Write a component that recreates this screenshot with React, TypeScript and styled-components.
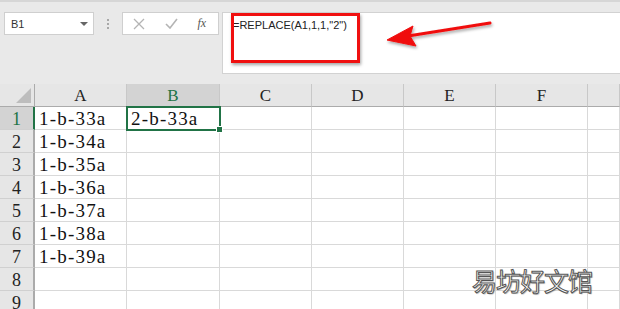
import React from "react";
import styled, { createGlobalStyle } from "styled-components";

const GlobalStyle = createGlobalStyle`
  html, body { margin: 0; padding: 0; }
  body {
    width: 620px;
    height: 309px;
    overflow: hidden;
    background: #ffffff;
    font-family: "Liberation Sans", Arial, sans-serif;
  }
`;

const Page = styled.div`
  position: relative;
  width: 620px;
  height: 309px;
  overflow: hidden;
`;

const Toolbar = styled.div`
  height: 84px;
  box-sizing: border-box;
  background: #e9e9e9;
  border-top: 2px solid #d6d6d6;
  display: flex;
  align-items: flex-start;
  padding: 10px 0 0 4px;
`;

const NameBox = styled.div`
  width: 90px;
  height: 23px;
  box-sizing: border-box;
  background: #fff;
  border: 1px solid #cfcfcf;
  display: flex;
  align-items: center;
  justify-content: space-between;
  padding: 0 5px 0 6px;
  font-size: 11px;
  color: #333;
`;

const Caret = styled.span`
  width: 0;
  height: 0;
  border-left: 4px solid transparent;
  border-right: 4px solid transparent;
  border-top: 4px solid #666;
`;

const Grip = styled.div`
  width: 28px;
  height: 23px;
  display: flex;
  flex-direction: column;
  align-items: center;
  justify-content: center;
  gap: 2px;
  span {
    width: 2px;
    height: 2px;
    background: #a8a8a8;
  }
`;

const FxButtons = styled.div`
  width: 97px;
  height: 23px;
  box-sizing: border-box;
  background: #fff;
  border: 1px solid #cfcfcf;
  display: flex;
  align-items: center;
  justify-content: space-around;
  padding: 0 2px 0 0;
`;

const FxLabel = styled.span`
  font-family: "Liberation Serif", serif;
  font-style: italic;
  font-size: 12px;
  color: #555;
`;

const FormulaBar = styled.div`
  position: relative;
  flex: 1;
  margin-left: 3px;
  height: 62px;
  box-sizing: border-box;
  background: #fff;
  border: 1px solid #d2d2d2;
  border-right: none;
  padding: 6px 0 0 10px;
  font-size: 11px;
  color: #222;
`;

const Highlight = styled.div`
  position: absolute;
  left: 8px;
  top: 0;
  width: 129px;
  height: 50px;
  box-sizing: border-box;
  border: 3px solid #f01010;
  box-shadow: 1px 2px 3px rgba(0, 0, 0, 0.35);
`;

const Sheet = styled.div`
  display: grid;
  grid-template-columns: 35px 92px 93px repeat(4, 92px) 1fr;
  grid-auto-rows: 23px;
`;

const Corner = styled.div`
  position: relative;
  background: #e6e6e6;
  border-right: 1px solid #ababab;
  border-bottom: 1px solid #ababab;
  &::after {
    content: "";
    position: absolute;
    right: 3px;
    bottom: 3px;
    width: 0;
    height: 0;
    border-left: 15px solid transparent;
    border-bottom: 15px solid #bdbdbd;
  }
`;

const ColHead = styled.div<{ $active?: boolean }>`
  background: ${(p) => (p.$active ? "#d3d3d3" : "#e6e6e6")};
  border-right: 1px solid #c8c8c8;
  border-bottom: 1px solid ${(p) => (p.$active ? "#217346" : "#ababab")};
  display: flex;
  align-items: center;
  justify-content: center;
  padding-top: 2px;
  font-family: "Liberation Serif", serif;
  font-size: 17px;
  color: ${(p) => (p.$active ? "#217346" : "#222")};
`;

const RowHead = styled.div<{ $active?: boolean }>`
  background: ${(p) => (p.$active ? "#d3d3d3" : "#e6e6e6")};
  border-right: 2px solid ${(p) => (p.$active ? "#217346" : "#ababab")};
  border-bottom: 1px solid #d0d0d0;
  display: flex;
  align-items: center;
  justify-content: center;
  padding-top: 2px;
  font-family: "Liberation Serif", serif;
  font-size: 18px;
  color: ${(p) => (p.$active ? "#217346" : "#222")};
`;

const Cell = styled.div<{ $selected?: boolean }>`
  position: relative;
  box-sizing: border-box;
  border-right: 1px solid #d9d9d9;
  border-bottom: 1px solid #d9d9d9;
  padding: 2px 0 0 4px;
  display: flex;
  align-items: center;
  white-space: nowrap;
  font-family: "Liberation Serif", serif;
  font-size: 19px;
  letter-spacing: 1.2px;
  color: #111;
  ${(p) =>
    p.$selected &&
    `
    outline: 2px solid #217346;
    outline-offset: -1px;
    z-index: 1;
    &::after {
      content: "";
      position: absolute;
      right: -4px;
      bottom: -4px;
      width: 5px;
      height: 5px;
      background: #217346;
      border: 1px solid #fff;
    }
  `}
`;

const Watermark = styled.div`
  position: absolute;
  left: 472px;
  top: 262px;
  font-family: "Noto Sans CJK SC", sans-serif;
  font-size: 25px;
  letter-spacing: -1px;
  color: #fff;
  -webkit-text-stroke: 1px #555;
  text-shadow: 1px 1px 1px rgba(0, 0, 0, 0.3);
`;

const cols = ["A", "B", "C", "D", "E", "F", ""];
const values = ["1-b-33a", "1-b-34a", "1-b-35a", "1-b-36a", "1-b-37a", "1-b-38a", "1-b-39a"];

function Arrow() {
  return (
    <svg
      width="140"
      height="50"
      viewBox="0 0 140 50"
      style={{ position: "absolute", left: 378, top: 12 }}
    >
      <defs>
        <filter id="sh" x="-20%" y="-50%" width="140%" height="200%">
          <feDropShadow dx="1" dy="2" stdDeviation="1.5" floodColor="#000" floodOpacity="0.35" />
        </filter>
      </defs>
      <g filter="url(#sh)" fill="#f01010" stroke="#f01010">
        <line x1="112" y1="11" x2="30" y2="24" strokeWidth="3" strokeLinecap="round" />
        <polygon points="9,28 35,14 32,24 38,34" strokeWidth="1" strokeLinejoin="round" />
      </g>
    </svg>
  );
}

export default function App() {
  const rows = Array.from({ length: 9 }, (_, i) => i + 1);
  return (
    <Page>
      <GlobalStyle />
      <Toolbar>
        <NameBox>
          B1 <Caret />
        </NameBox>
        <Grip>
          <span />
          <span />
          <span />
        </Grip>
        <FxButtons>
          <svg width="12" height="12" viewBox="0 0 12 12">
            <path d="M1 1 L11 11 M11 1 L1 11" stroke="#b4b4b4" strokeWidth="1.3" />
          </svg>
          <svg width="13" height="11" viewBox="0 0 13 11">
            <path d="M1 6 L5 10 L12 1" stroke="#b4b4b4" strokeWidth="1.6" fill="none" />
          </svg>
          <FxLabel>fx</FxLabel>
        </FxButtons>
        <FormulaBar>
          =REPLACE(A1,1,1,"2")
          <Highlight />
        </FormulaBar>
      </Toolbar>
      <Sheet>
        <Corner />
        {cols.map((c, i) => (
          <ColHead key={i} $active={c === "B"}>
            {c}
          </ColHead>
        ))}
        {rows.map((r) => (
          <React.Fragment key={r}>
            <RowHead $active={r === 1}>{r}</RowHead>
            {cols.map((c, i) => (
              <Cell key={i} $selected={r === 1 && c === "B"}>
                {c === "A" ? values[r - 1] : r === 1 && c === "B" ? "2-b-33a" : ""}
              </Cell>
            ))}
          </React.Fragment>
        ))}
      </Sheet>
      <Arrow />
      <Watermark>易坊好文馆</Watermark>
    </Page>
  );
}
